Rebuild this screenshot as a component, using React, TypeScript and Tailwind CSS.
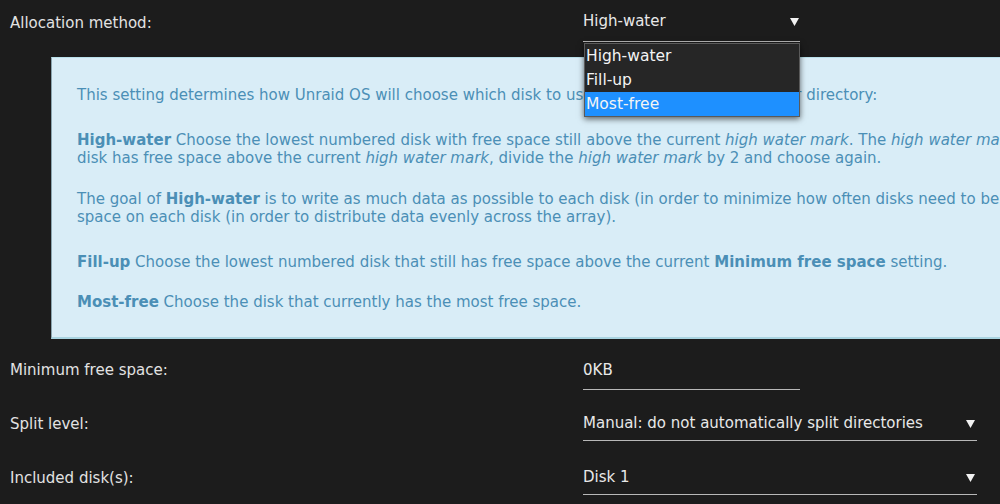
import React from "react";

const font = { fontFamily: '"DejaVu Sans", "Liberation Sans", sans-serif' };

const options = ["High-water", "Fill-up", "Most-free"];

function Arrow() {
  return (
    <svg width="9" height="9" viewBox="0 0 9 9" className="shrink-0">
      <path d="M0 1h9L4.5 9z" fill="#f2f2f2" />
    </svg>
  );
}

function Row({ label, children }: { label: string; children: React.ReactNode }) {
  return (
    <div className="flex h-[54px] items-start">
      <div className="w-[573px] shrink-0 pt-[12px] text-[15px] text-[#e2e2e2]">{label}</div>
      {children}
    </div>
  );
}

export default function App() {
  return (
    <div
      className="h-[504px] w-[1000px] overflow-hidden bg-[#1c1c1c] pl-[10px] pt-[1px]"
      style={font}
    >
      {/* allocation method with its open list */}
      <div className="relative flex h-[56px] items-start">
        <div className="w-[573px] shrink-0 pt-[11px] text-[15px] text-[#e2e2e2]">
          Allocation method:
        </div>
        <div className="relative w-[217px]">
          <div className="flex h-[41px] items-center justify-between border-b border-[#b8b8b8] pb-[1px] pr-[1px] pt-[2px] text-[15px] text-[#e8e8e8]">
            <span>High-water</span>
            <Arrow />
          </div>
          <ul className="absolute left-[1px] top-[42px] z-10 w-[216px] border border-[#5a5a5a] bg-[#262626] text-[15.5px] text-[#f4f4f4] shadow-[0_2px_6px_rgba(0,0,0,0.6)]">
            {options.map((o) => (
              <li
                key={o}
                className={`h-[24px] px-[1px] leading-[24px] ${
                  o === "Most-free" ? "bg-[#1e90ff]" : ""
                }`}
              >
                {o}
              </li>
            ))}
          </ul>
        </div>
      </div>

      {/* help text */}
      <div className="ml-[41px] w-[1800px] border-l border-t border-b-2 border-l-[#8aa4ae] border-t-[#b9e0ea] border-b-[#a9d4e1] bg-[#d9edf7] px-[25px] pb-[26px] pt-[28px] text-[15px] leading-[18px] text-[#4b8fb6]">
        <p className="mb-[27px]">
          This setting determines how Unraid OS will choose which disk to use when creating a new
          file or directory:
        </p>
        <p className="mb-[23px]">
          <b>High-water</b> Choose the lowest numbered disk with free space still above the current{" "}
          <i>high water mark</i>. The <i>high water mark</i> is initialized with the size of the
          largest data disk divided by 2. If no
          <br />
          disk has free space above the current <i>high water mark</i>, divide the{" "}
          <i>high water mark</i> by 2 and choose again.
        </p>
        <p className="mb-[27px]">
          The goal of <b>High-water</b> is to write as much data as possible to each disk (in order
          to minimize how often disks need to be spun up), while at the same time, try to keep the
          same amount of free
          <br />
          space on each disk (in order to distribute data evenly across the array).
        </p>
        <p className="mb-[22px]">
          <b>Fill-up</b> Choose the lowest numbered disk that still has free space above the current{" "}
          <b>Minimum free space</b> setting.
        </p>
        <p>
          <b>Most-free</b> Choose the disk that currently has the most free space.
        </p>
      </div>

      <div className="pt-[8px]">
        <Row label="Minimum free space:">
          <div className="mt-[12px] h-[31px] w-[217px] border-b border-[#b8b8b8] text-[15px] text-[#e8e8e8]">
            0KB
          </div>
        </Row>
        <Row label="Split level:">
          <div className="mt-[2px] flex h-[38px] w-[394px] items-center justify-between border-b border-[#b8b8b8] pr-[2px] pt-[4px] text-[15px] text-[#e8e8e8]">
            <span>Manual: do not automatically split directories</span>
            <Arrow />
          </div>
        </Row>
        <Row label="Included disk(s):">
          <div className="mt-[2px] flex h-[38px] w-[394px] items-center justify-between border-b border-[#b8b8b8] pr-[2px] pt-[4px] text-[15px] text-[#e8e8e8]">
            <span>Disk 1</span>
            <Arrow />
          </div>
        </Row>
      </div>
    </div>
  );
}
